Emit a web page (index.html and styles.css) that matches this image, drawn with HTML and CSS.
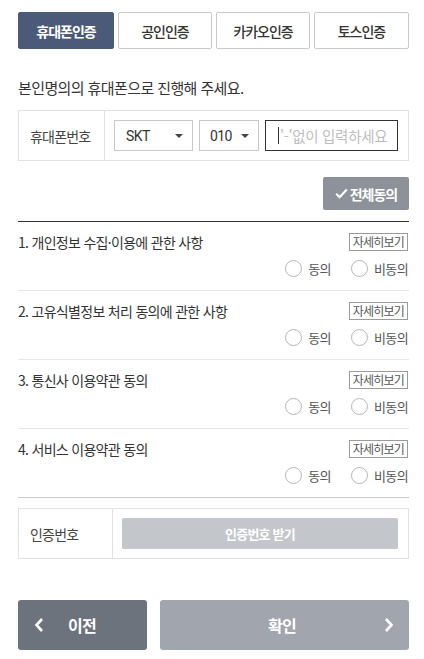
FILE: index.html
```html
<!DOCTYPE html>
<html lang="ko">
<head>
<meta charset="utf-8">
<link rel="stylesheet" href="styles.css">
</head>
<body>
<div class="page">
  <div class="tabs">
    <div class="tab active">휴대폰인증</div>
    <div class="tab">공인인증</div>
    <div class="tab">카카오인증</div>
    <div class="tab">토스인증</div>
  </div>
  <p class="guide">본인명의의 휴대폰으로 진행해 주세요.</p>
  <div class="row-table">
    <div class="cell-label phone-label">휴대폰번호</div>
    <div class="cell-body">
      <div class="select sel-carrier"><span>SKT</span><span class="caret"></span></div>
      <div class="select sel-prefix"><span>010</span><span class="caret"></span></div>
      <div class="input"><span class="cursor"></span><span class="ph">'-'없이 입력하세요</span></div>
    </div>
  </div>
  <div class="all-row">
    <button class="all-btn"><svg width="13" height="11" viewBox="0 0 13 11"><path d="M1.2 5.8 L4.6 9.2 L11.8 1.6" fill="none" stroke="#fff" stroke-width="2.2"/></svg>전체동의</button>
  </div>
  <div class="terms">
    <div class="term">
      <div class="term-head"><span class="term-title">1. 개인정보 수집·이용에 관한 사항</span><span class="more">자세히보기</span></div>
      <div class="term-radios"><span class="radio"></span><span class="rlabel">동의</span><span class="radio"></span><span class="rlabel">비동의</span></div>
    </div>
    <div class="term">
      <div class="term-head"><span class="term-title">2. 고유식별정보 처리 동의에 관한 사항</span><span class="more">자세히보기</span></div>
      <div class="term-radios"><span class="radio"></span><span class="rlabel">동의</span><span class="radio"></span><span class="rlabel">비동의</span></div>
    </div>
    <div class="term">
      <div class="term-head"><span class="term-title">3. 통신사 이용약관 동의</span><span class="more">자세히보기</span></div>
      <div class="term-radios"><span class="radio"></span><span class="rlabel">동의</span><span class="radio"></span><span class="rlabel">비동의</span></div>
    </div>
    <div class="term last">
      <div class="term-head"><span class="term-title">4. 서비스 이용약관 동의</span><span class="more">자세히보기</span></div>
      <div class="term-radios"><span class="radio"></span><span class="rlabel">동의</span><span class="radio"></span><span class="rlabel">비동의</span></div>
    </div>
  </div>
  <div class="row-table cert">
    <div class="cell-label cert-label">인증번호</div>
    <div class="cell-body">
      <div class="cert-btn">인증번호 받기</div>
    </div>
  </div>
  <div class="bottom">
    <div class="btn-prev"><svg class="chev" width="10" height="16" viewBox="0 0 10 16"><path d="M8 2 L2.5 8 L8 14" fill="none" stroke="#fff" stroke-width="2.6"/></svg><span>이전</span></div>
    <div class="btn-ok"><span>확인</span><svg class="chev" width="10" height="16" viewBox="0 0 10 16"><path d="M2 2 L7.5 8 L2 14" fill="none" stroke="#fff" stroke-width="2.6"/></svg></div>
  </div>
</div>
</body>
</html>
```
FILE: styles.css
```css
* { box-sizing: border-box; }
html, body { margin: 0; padding: 0; background: #fff; }
body {
  font-family: "Noto Sans CJK KR", "Noto Sans", sans-serif;
  color: #333;
}
.page { padding: 12px 15px 0 18px; width: 424px; }

.tabs {
  display: grid;
  grid-template-columns: 96px 94px 94px 95px;
  column-gap: 4px;
}
.tab {
  height: 37px;
  border: 1px solid #c9c9c9;
  border-radius: 2px;
  display: flex; align-items: center; justify-content: center;
  font-size: 14px; font-weight: 500; letter-spacing: -1px;
  color: #333;
}
.tab.active { background: #4b5a78; border-color: #4b5a78; color: #fff; font-weight: 700; }

.guide {
  margin: 28px 0 0 0;
  font-size: 15px; line-height: 22px; letter-spacing: -0.6px;
  color: #333;
}

.row-table {
  margin-top: 11px;
  height: 51px;
  border: 1px solid #e2e2e2;
  display: flex;
}
.cell-label {
  border-right: 1px solid #e2e2e2;
  display: flex; align-items: center;
  padding-left: 11px;
  font-size: 14px; letter-spacing: -0.8px; color: #444;
}
.phone-label { width: 86px; }
.cert-label { width: 94px; }
.cell-body { flex: 1; display: flex; align-items: center; padding: 0 10px 0 9px; }

.select {
  height: 31px;
  border: 1px solid #c8c8c8;
  display: flex; align-items: center; justify-content: space-between;
  padding: 0 9px 0 11px;
  font-family: "Roboto", "Noto Sans", sans-serif;
  font-size: 14px; color: #333; letter-spacing: -0.6px;
}
.sel-carrier { width: 79px; margin-right: 6px; }
.sel-prefix { width: 60px; margin-right: 6px; padding-left: 10px; }
.caret {
  width: 0; height: 0;
  border-left: 4px solid transparent; border-right: 4px solid transparent;
  border-top: 4px solid #444;
}
.input {
  flex: 1; height: 31px;
  border: 1px solid #333;
  display: flex; align-items: center;
  padding-left: 12px;
  font-size: 14.5px; letter-spacing: -0.3px; color: #bdbdbd;
}
.cursor { width: 1px; height: 17px; background: #333; margin-right: 1px; }

.all-row { display: flex; justify-content: flex-end; margin-top: 16px; }
.all-btn {
  width: 86px; height: 33px;
  border: none; border-radius: 2px;
  background: #8d9199; color: #fff;
  font-family: "Noto Sans CJK KR", sans-serif;
  font-size: 14px; font-weight: 700; letter-spacing: -1px;
  display: flex; align-items: center; justify-content: center; gap: 2px;
  padding: 0;
}

.terms { margin-top: 11px; border-top: 1px solid #333; }
.term {
  padding: 11px 1px 13px 0;
  border-bottom: 1px solid #e6e6e6;
}
.term.last { border-bottom-color: #c8c8c8; }
.term-head { display: flex; justify-content: space-between; align-items: center; height: 18px; }
.term-title { font-size: 14px; letter-spacing: -0.7px; color: #333; line-height: 18px; }
.more {
  height: 18px; padding: 0 3px;
  border: 1px solid #9a9a9a;
  font-size: 12px; line-height: 16px; letter-spacing: -0.8px; color: #555;
}
.term-radios {
  margin-top: 9px;
  display: flex; justify-content: flex-end; align-items: center;
  height: 17px;
}
.radio {
  width: 17px; height: 17px; border-radius: 50%;
  border: 1px solid #b5b5b5; background: #fff;
  margin-right: 6px;
}
.rlabel { font-size: 13px; letter-spacing: -0.6px; color: #555; }
.rlabel + .radio { margin-left: 20px; }

.cert { margin-top: 10px; }
.cert .cell-body { padding: 0 10px 0 9px; }
.cert-btn {
  flex: 1; height: 31px; border-radius: 2px;
  background: #c3c6ca; color: #fff;
  display: flex; align-items: center; justify-content: center;
  font-size: 13px; font-weight: 700; letter-spacing: -0.8px;
}

.bottom { margin-top: 41px; display: flex; gap: 13px; }
.btn-prev, .btn-ok {
  height: 50px; border-radius: 3px;
  display: flex; align-items: center;
  color: #fff; font-size: 16px; font-weight: 700; letter-spacing: -0.6px;
}
.btn-prev { width: 129px; background: #6c737c; padding-left: 16px; }
.btn-prev span { margin-left: 24px; }
.btn-ok { flex: 1; background: #a1a5ad; justify-content: space-between; padding: 0 15px 0 108px; }
.chev { display: block; }
```
